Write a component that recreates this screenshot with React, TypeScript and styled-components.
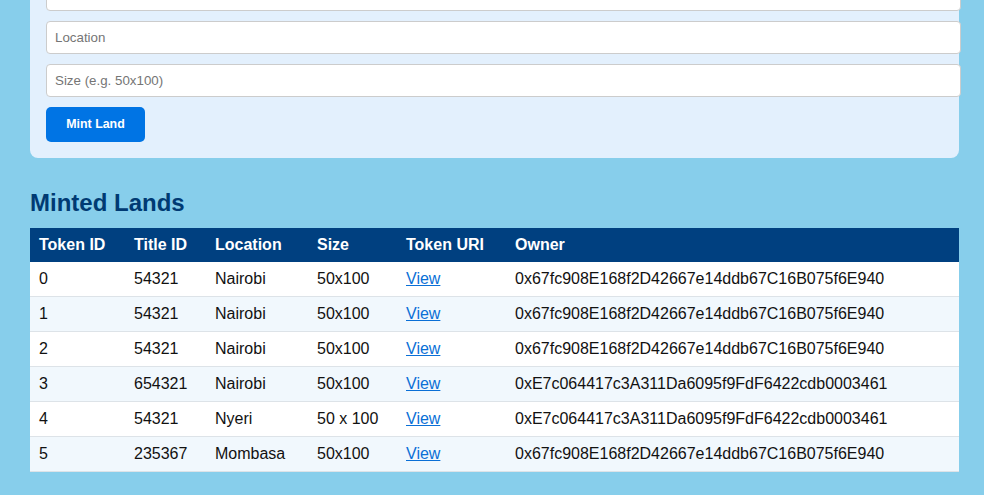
import React from "react";
import styled, { createGlobalStyle } from "styled-components";

const GlobalStyle = createGlobalStyle`
  html, body {
    margin: 0;
    padding: 0;
    background: #87ceeb;
    font-family: "Liberation Sans", Arial, sans-serif;
    overflow: hidden;
  }
`;

const Page = styled.main`
  width: 929px;
  margin: -38px 0 0 30px;
`;

const MintCard = styled.section`
  background: #e3f0fd;
  border-radius: 8px;
  padding: 16px;
`;

const Input = styled.input`
  display: block;
  width: 100%;
  height: 15px;
  padding: 8px;
  margin: 0 0 10px;
  border: 1px solid #cccccc;
  border-radius: 4px;
  background: #ffffff;
  font-family: "Liberation Sans", Arial, sans-serif;
  font-size: 13.333px;
  line-height: 15px;
  color: #222;
  &::placeholder {
    color: #757575;
  }
`;

const MintButton = styled.button`
  display: block;
  width: 99px;
  padding: 10px 0;
  border: none;
  border-radius: 5px;
  background: #0074e4;
  color: #ffffff;
  font-family: "Liberation Sans", Arial, sans-serif;
  font-size: 12.4px;
  font-weight: bold;
  line-height: 15px;
  text-align: center;
  cursor: pointer;
`;

const SectionTitle = styled.h2`
  margin: 31px 0 11px;
  font-size: 24px;
  line-height: 28px;
  font-weight: bold;
  color: #003a73;
`;

const Table = styled.table`
  width: 100%;
  border-collapse: collapse;
  table-layout: fixed;
  font-size: 16px;
  line-height: 18px;
`;

const HeadCell = styled.th`
  background: #004080;
  color: #ffffff;
  text-align: left;
  font-weight: bold;
  padding: 8px 9px;
`;

const Row = styled.tr<{ $alt: boolean }>`
  background: ${(p) => (p.$alt ? "#f1f8fd" : "#ffffff")};
`;

const Cell = styled.td`
  padding: 8px 9px;
  border-bottom: 1px solid #dde3e8;
  color: #111111;
  white-space: nowrap;
`;

const ViewLink = styled.a`
  color: #0a6fd6;
  text-decoration: underline;
`;

const A1 = "0x67fc908E168f2D42667e14ddb67C16B075f6E940";
const A2 = "0xE7c064417c3A311Da6095f9FdF6422cdb0003461";

const rows = [
  { id: "0", title: "54321", loc: "Nairobi", size: "50x100", owner: A1 },
  { id: "1", title: "54321", loc: "Nairobi", size: "50x100", owner: A1 },
  { id: "2", title: "54321", loc: "Nairobi", size: "50x100", owner: A1 },
  { id: "3", title: "654321", loc: "Nairobi", size: "50x100", owner: A2 },
  { id: "4", title: "54321", loc: "Nyeri", size: "50 x 100", owner: A2 },
  { id: "5", title: "235367", loc: "Mombasa", size: "50x100", owner: A1 },
];

const colWidths = [95, 81, 102, 89, 109];

export default function App() {
  return (
    <>
      <GlobalStyle />
      <Page>
        <MintCard>
          <Input placeholder="Title ID" />
          <Input placeholder="Location" />
          <Input placeholder="Size (e.g. 50x100)" />
          <MintButton>Mint Land</MintButton>
        </MintCard>
        <SectionTitle>Minted Lands</SectionTitle>
        <Table>
          <colgroup>
            {colWidths.map((w, i) => (
              <col key={i} style={{ width: w }} />
            ))}
            <col />
          </colgroup>
          <thead>
            <tr>
              <HeadCell>Token ID</HeadCell>
              <HeadCell>Title ID</HeadCell>
              <HeadCell>Location</HeadCell>
              <HeadCell>Size</HeadCell>
              <HeadCell>Token URI</HeadCell>
              <HeadCell>Owner</HeadCell>
            </tr>
          </thead>
          <tbody>
            {rows.map((r, i) => (
              <Row key={r.id} $alt={i % 2 === 1}>
                <Cell>{r.id}</Cell>
                <Cell>{r.title}</Cell>
                <Cell>{r.loc}</Cell>
                <Cell>{r.size}</Cell>
                <Cell>
                  <ViewLink href="#">View</ViewLink>
                </Cell>
                <Cell>{r.owner}</Cell>
              </Row>
            ))}
          </tbody>
        </Table>
      </Page>
    </>
  );
}
